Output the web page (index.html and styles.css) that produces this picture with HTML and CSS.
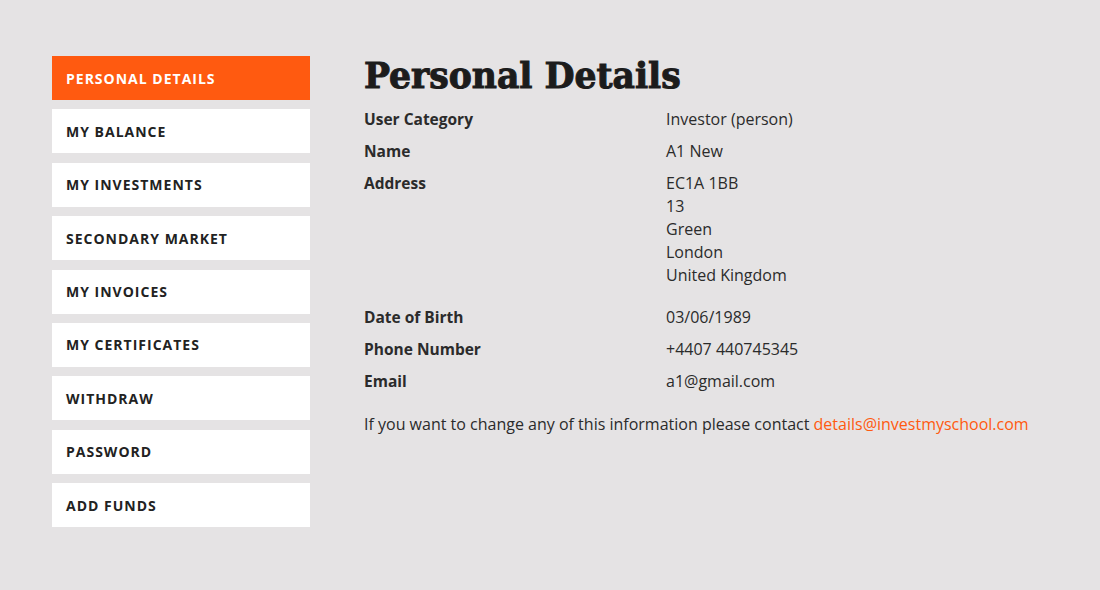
FILE: index.html
```html
<!DOCTYPE html>
<html lang="en">
<head>
<meta charset="UTF-8">
<title>Personal Details</title>
<link rel="stylesheet" href="styles.css">
</head>
<body>

<div class="account">
  <nav class="side-menu">
    <a class="menu-item active" href="#">Personal Details</a>
    <a class="menu-item" href="#">My Balance</a>
    <a class="menu-item" href="#">My Investments</a>
    <a class="menu-item" href="#">Secondary Market</a>
    <a class="menu-item" href="#">My Invoices</a>
    <a class="menu-item" href="#">My Certificates</a>
    <a class="menu-item" href="#">Withdraw</a>
    <a class="menu-item" href="#">Password</a>
    <a class="menu-item" href="#">Add Funds</a>
  </nav>

  <section class="details">
    <h1>Personal Details</h1>
    <div class="row"><span class="label">User Category</span><span class="value">Investor (person)</span></div>
    <div class="row"><span class="label">Name</span><span class="value">A1 New</span></div>
    <div class="row address"><span class="label">Address</span><span class="value">EC1A 1BB<br>13<br>Green<br>London<br>United Kingdom</span></div>
    <div class="row"><span class="label">Date of Birth</span><span class="value">03/06/1989</span></div>
    <div class="row"><span class="label">Phone Number</span><span class="value">+4407 440745345</span></div>
    <div class="row"><span class="label">Email</span><span class="value">a1@gmail.com</span></div>
    <p class="note">If you want to change any of this information please contact <a href="#">details@investmyschool.com</a></p>
  </section>
</div>

</body>
</html>
```

FILE: styles.css
```css
body {
  margin: 0;
  background: #e5e3e4;
  font-family: "Open Sans", "Noto Sans", sans-serif;
  color: #2b2b2b;
}
.account {
  display: flex;
  padding: 56px 0 0 52px;
}
.side-menu {
  display: flex; flex-direction: column;
  gap: 9.4px;
  width: 258px;
}
.menu-item {
  display: flex; align-items: center;
  height: 44px;
  padding-left: 14px;
  background: #fff;
  color: #222;
  text-decoration: none;
  text-transform: uppercase;
  font-size: 14px; font-weight: 700;
  letter-spacing: 1px;
}
.menu-item.active { background: #ff5a10; color: #fff; }
.details {
  margin-left: 54px;
}
.details h1 {
  margin: 0 0 7px;
  font-family: "DejaVu Serif", serif;
  font-weight: 900;
  font-size: 34.6px;
  line-height: 40px;
  color: #1c1c1c;
  -webkit-text-stroke: 1px #1c1c1c;
}
.row {
  display: flex;
  padding: 4.5px 0;
  font-size: 16px;
  line-height: 23px;
}
.row.address { margin-bottom: 10px; }
.label { width: 302px; font-weight: 700; font-size: 15.5px; }
.note {
  margin: 16px 0 0;
  font-size: 16px;
  line-height: 23px;
}
.note a { color: #ff5a10; text-decoration: none; }
```
